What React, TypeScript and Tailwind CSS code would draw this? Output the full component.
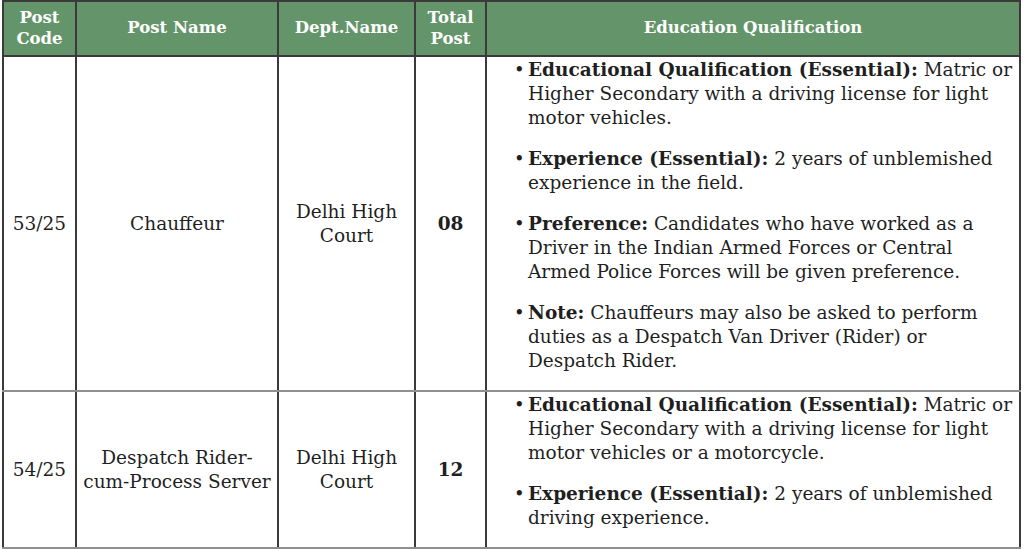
const rows = [
  {
    code: "53/25",
    name: "Chauffeur",
    dept: ["Delhi High", "Court"],
    total: "08",
    items: [
      {
        label: "Educational Qualification (Essential):",
        text: "Matric or Higher Secondary with a driving license for light motor vehicles.",
      },
      {
        label: "Experience (Essential):",
        text: "2 years of unblemished experience in the field.",
      },
      {
        label: "Preference:",
        text: "Candidates who have worked as a Driver in the Indian Armed Forces or Central Armed Police Forces will be given preference.",
      },
      {
        label: "Note:",
        text: "Chauffeurs may also be asked to perform duties as a Despatch Van Driver (Rider) or Despatch Rider.",
      },
    ],
  },
  {
    code: "54/25",
    name: "Despatch Rider-cum-Process Server",
    dept: ["Delhi High", "Court"],
    total: "12",
    items: [
      {
        label: "Educational Qualification (Essential):",
        text: "Matric or Higher Secondary with a driving license for light motor vehicles or a motorcycle.",
      },
      {
        label: "Experience (Essential):",
        text: "2 years of unblemished driving experience.",
      },
    ],
  },
];

export default function App() {
  return (
    <div className="h-[549px] w-[1025px] bg-white pl-[2px] font-['DejaVu_Serif',serif] text-[#1f1f1f]">
      <table className="w-[1019px] table-fixed border-collapse">
        <colgroup>
          <col className="w-[73px]" />
          <col className="w-[202px]" />
          <col className="w-[137px]" />
          <col className="w-[71px]" />
          <col />
        </colgroup>
        <thead>
          <tr className="h-[55px] bg-[#64956a] text-[16.5px] leading-[21px] font-bold text-white">
            <th className="border-2 border-[#3a3a3a] px-1 pb-[2px]">
              Post
              <br />
              Code
            </th>
            <th className="border-2 border-[#3a3a3a] px-1 pb-[2px]">Post Name</th>
            <th className="border-2 border-[#3a3a3a] px-1 pb-[2px]">Dept.Name</th>
            <th className="border-2 border-[#3a3a3a] px-1 pb-[2px]">
              Total
              <br />
              Post
            </th>
            <th className="border-2 border-[#3a3a3a] px-1 pb-[2px]">Education Qualification</th>
          </tr>
        </thead>
        <tbody>
          {rows.map((row) => (
            <tr key={row.code} className="text-[18.5px] leading-[24px]">
              <td className="border-x-2 border-y-2 border-x-[#3a3a3a] border-y-[#8f8f8f] text-center">
                {row.code}
              </td>
              <td className="border-x-2 border-y-2 border-x-[#3a3a3a] border-y-[#8f8f8f] px-[2px] text-center">
                {row.name}
              </td>
              <td className="border-x-2 border-y-2 border-x-[#3a3a3a] border-y-[#8f8f8f] text-center">
                {row.dept[0]}
                <br />
                {row.dept[1]}
              </td>
              <td className="border-x-2 border-y-2 border-x-[#3a3a3a] border-y-[#8f8f8f] text-center font-bold">
                {row.total}
              </td>
              <td className="border-x-2 border-y-2 border-x-[#3a3a3a] border-y-[#8f8f8f] pt-[1px] pr-[2px] pl-[27px]">
                <ul>
                  {row.items.map((it) => (
                    <li key={it.label} className="mb-[17px] flex">
                      <span className="w-[14px] shrink-0 text-[18px]">•</span>
                      <span>
                        <b>{it.label}</b> {it.text}
                      </span>
                    </li>
                  ))}
                </ul>
              </td>
            </tr>
          ))}
        </tbody>
      </table>
    </div>
  );
}
